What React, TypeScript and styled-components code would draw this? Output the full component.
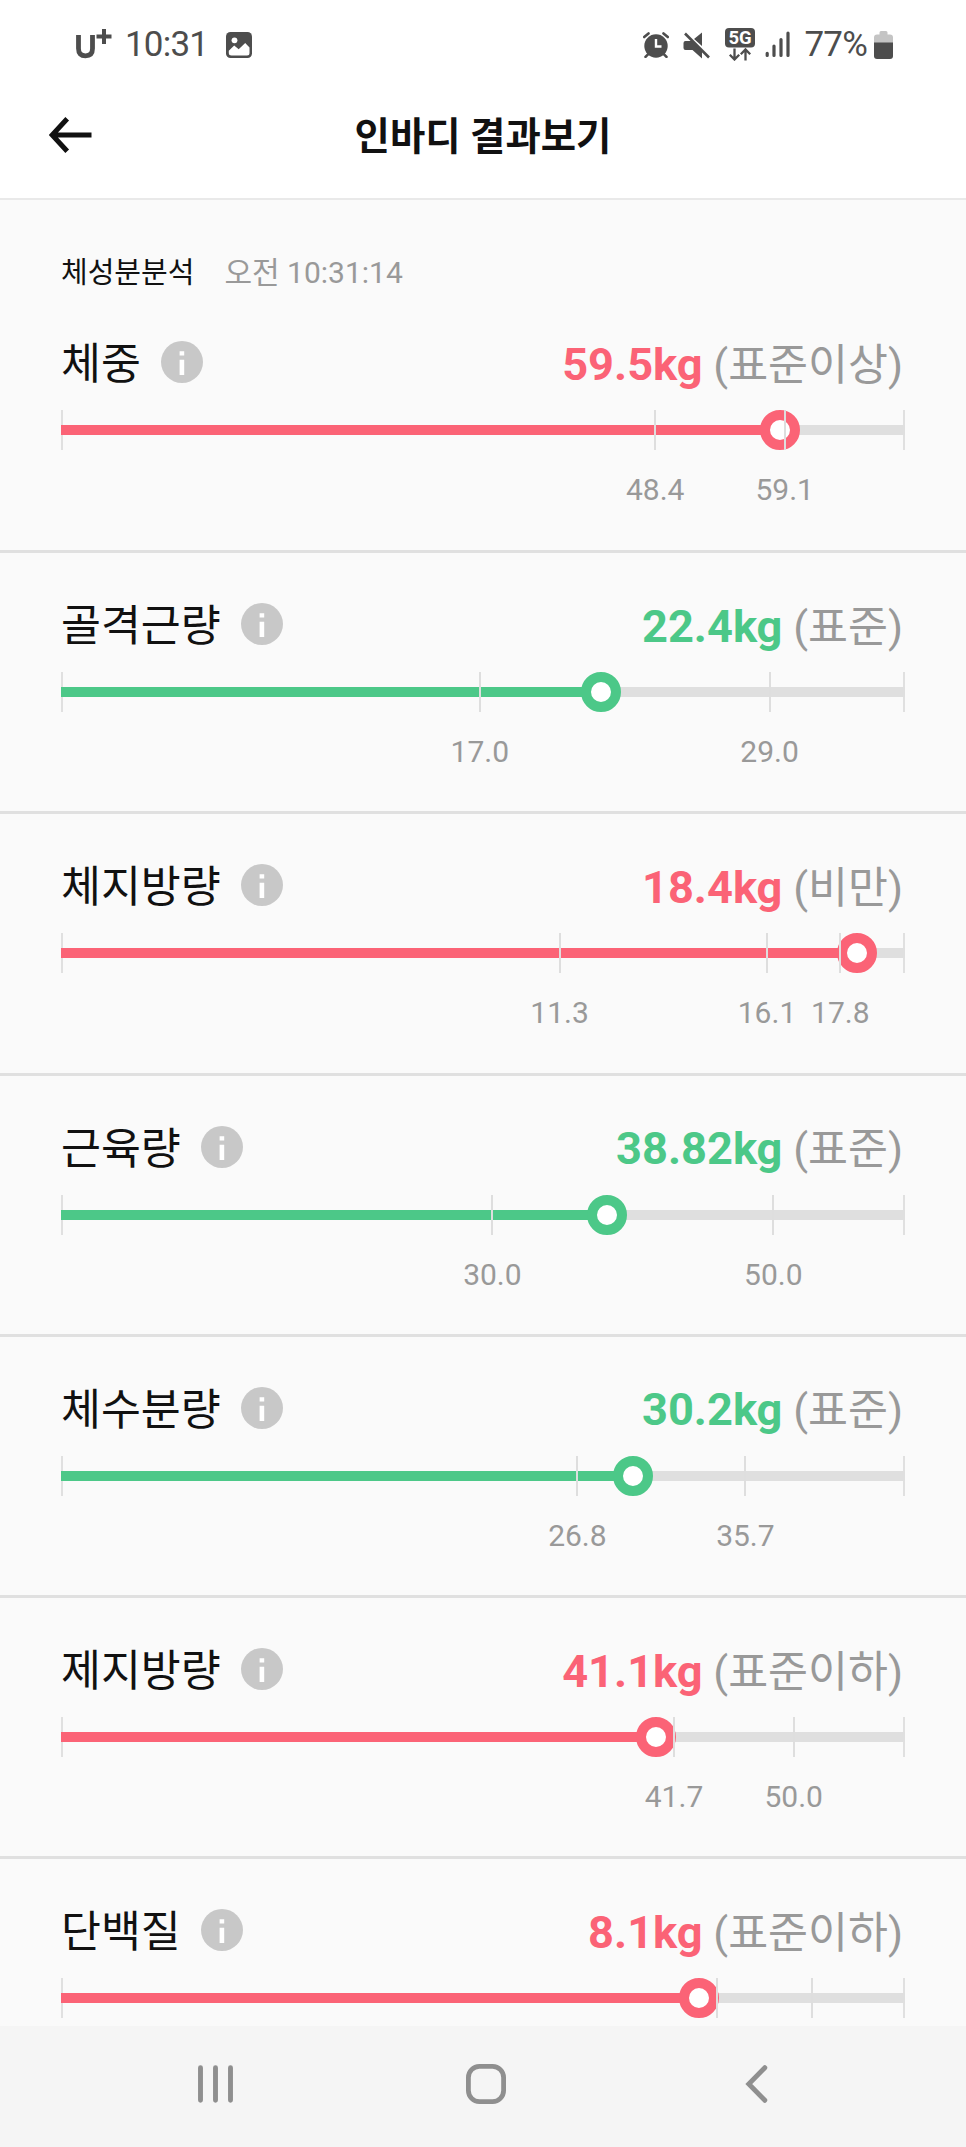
import React from 'react';
import styled, { createGlobalStyle } from 'styled-components';

const GlobalStyle = createGlobalStyle`
  * { box-sizing: border-box; }
  body { margin: 0; background: #fafafa; font-family: Roboto, 'Noto Sans CJK KR', sans-serif; }
`;

const RED = '#fb6376';
const GREEN = '#4cc888';

const Screen = styled.div`
  width: 966px;
  height: 2147px;
  display: flex;
  flex-direction: column;
  overflow: hidden;
  background: #fafafa;
`;

const StatusBar = styled.div`
  flex: none;
  height: 88px;
  padding: 0 73px 0 75px;
  display: flex;
  align-items: center;
  background: #fff;
  color: #4d4d4d;
`;

const StatusText = styled.span<{ $ml: number }>`
  margin-left: ${p => p.$ml}px;
  margin-top: 2px;
  font-size: 35px;
  line-height: 42px;
  letter-spacing: -0.8px;
`;

const StatusIcon = styled.svg<{ $ml?: number; $mt?: number }>`
  display: block;
  flex: none;
  margin-left: ${p => p.$ml ?? 0}px;
  margin-top: ${p => p.$mt ?? 0}px;
`;

const Spacer = styled.div`
  flex: 1;
`;

const AppBar = styled.header`
  flex: none;
  height: 112px;
  display: grid;
  grid-template-columns: 1fr auto 1fr;
  align-items: center;
  padding: 0 48px 16px;
  background: #fff;
  border-bottom: 2px solid #e9e9e9;
`;

const Title = styled.h1`
  margin: 4px 0 0;
  font-size: 38.4px;
  line-height: 56px;
  font-weight: 700;
  color: #111;
`;

const Content = styled.main`
  flex: 1;
  min-height: 0;
  overflow: hidden;
`;

const Caption = styled.div`
  height: 89px;
  padding: 51px 61px 0;
  display: flex;
  gap: 30px;
  font-size: 30px;
  line-height: 44px;
  color: #999;
`;

const CaptionName = styled.span`
  font-size: 29px;
  color: #111;
`;

const Section = styled.section`
  height: 261.25px;
  padding: 42px 61px 0;
  border-bottom: 3px solid #e0e0e0;
`;

const FirstSection = styled(Section)`
  height: 264px;
  padding-top: 44px;
`;

const Heading = styled.div`
  height: 64px;
  display: flex;
  align-items: center;
  justify-content: space-between;
  font-size: 43.4px;
  line-height: 64px;
`;

const Name = styled.div`
  display: flex;
  align-items: center;
  gap: 20px;
  color: #111;
`;

const InfoBadge = styled.svg`
  display: block;
  margin-bottom: 6px;
`;

const Value = styled.div`
  margin-right: 2px;
  color: #999;
`;

const Amount = styled.strong<{ $color: string }>`
  font-size: 45.2px;
  font-weight: 700;
  color: ${p => p.$color};
`;

const Gauge = styled.div`
  position: relative;
  height: 40px;
  margin-top: 13.2px;
  padding: 15px 0;
  border: solid #e0e0e0;
  border-width: 0 2px;
`;

const Track = styled.div`
  height: 10px;
  margin: 0 -2px;
  background: #dfdfdf;
`;

const Fill = styled.div<{ $color: string }>`
  height: 100%;
  background: ${p => p.$color};
`;

const Knob = styled.div<{ $color: string }>`
  position: absolute;
  top: 0;
  width: 40px;
  height: 40px;
  margin-left: -22px;
  border: 10px solid ${p => p.$color};
  border-radius: 50%;
  background: #fff;
`;

const Tick = styled.div`
  position: absolute;
  top: 0;
  width: 2px;
  height: 40px;
  margin-left: -3px;
  background: #dedede;
`;

const TickLabel = styled.span`
  position: absolute;
  top: 60px;
  width: 100px;
  margin-left: -52px;
  text-align: center;
  font-size: 30px;
  line-height: 40px;
  color: #999;
`;

const NavBar = styled.nav`
  flex: none;
  height: 121px;
  padding: 0 192px 5px;
  display: flex;
  align-items: center;
  justify-content: space-between;
  background: #f5f5f5;
`;

const NavIcon = styled.svg`
  display: block;
`;

const HomeIcon = styled(NavIcon)`
  margin-left: 5px;
`;

interface Metric {
  name: string;
  amount: string;
  status: string;
  color: string;
  at: number;
  ticks: [number, string][];
}

/* Knob and tick places are distances along the 844px scale. */
const METRICS: Metric[] = [
  { name: '체중', amount: '59.5kg', status: '표준이상', color: RED, at: 719.4, ticks: [[594.2, '48.4'], [723.7, '59.1']] },
  { name: '골격근량', amount: '22.4kg', status: '표준', color: GREEN, at: 540.4, ticks: [[418.8, '17.0'], [708.6, '29.0']] },
  { name: '체지방량', amount: '18.4kg', status: '비만', color: RED, at: 796.3, ticks: [[498.6, '11.3'], [706, '16.1'], [779.3, '17.8']] },
  { name: '근육량', amount: '38.82kg', status: '표준', color: GREEN, at: 546, ticks: [[431.4, '30.0'], [712.3, '50.0']] },
  { name: '체수분량', amount: '30.2kg', status: '표준', color: GREEN, at: 572, ticks: [[516.4, '26.8'], [684.4, '35.7']] },
  { name: '제지방량', amount: '41.1kg', status: '표준이하', color: RED, at: 595, ticks: [[613, '41.7'], [732.7, '50.0']] },
  { name: '단백질', amount: '8.1kg', status: '표준이하', color: RED, at: 638.4, ticks: [[656, ''], [750.7, '']] },
];

const InfoIcon = () => (
  <InfoBadge width="42" height="42" viewBox="0 0 42 42">
    <circle cx="21" cy="21" r="21" fill="#c8c8c8" />
    <path d="M18.6 10.2h4.6v4.2h-4.6zM18.6 18.8h4.6V34h-4.6z" fill="#fff" />
  </InfoBadge>
);

const MetricRow = ({ metric, first }: { metric: Metric; first: boolean }) => {
  const Wrap = first ? FirstSection : Section;
  return (
    <Wrap>
      <Heading>
        <Name>{metric.name}<InfoIcon /></Name>
        <Value><Amount $color={metric.color}>{metric.amount}</Amount> ({metric.status})</Value>
      </Heading>
      <Gauge>
        <Track><Fill $color={metric.color} style={{ width: metric.at }} /></Track>
        <Knob $color={metric.color} style={{ left: metric.at }} />
        {metric.ticks.map(([x]) => <Tick key={x} style={{ left: x }} />)}
        {metric.ticks.map(([x, label]) => label && <TickLabel key={x} style={{ left: x }}>{label}</TickLabel>)}
      </Gauge>
    </Wrap>
  );
};

export default function App() {
  return (
    <Screen>
      <GlobalStyle />
      <StatusBar>
        <StatusIcon width="38" height="32" viewBox="0 0 38 32">
          <path d="M3.5 7v13.5q0 7.3 7 7.3t7-7.3V7" fill="none" stroke="#4d4d4d" strokeWidth="4.8" />
          <path d="M29 1v15M21.5 8.5h15" stroke="#4d4d4d" strokeWidth="4" fill="none" />
        </StatusIcon>
        <StatusText $ml={12}>10:31</StatusText>
        <StatusIcon $ml={18} $mt={2} width="26" height="26" viewBox="0 0 26 26">
          <rect width="26" height="26" rx="4.5" fill="#4d4d4d" />
          <circle cx="8.5" cy="8.3" r="2.9" fill="#fff" />
          <path d="M2.8 18.8l5.4-5.3 4.5 3.8 6.5-6.3 4.300 4.500v5.500q0 2.500-2.500 2.500h-15.500q-2.700 0-2.700-2.500z" fill="#fff" />
        </StatusIcon>
        <Spacer />
        <StatusIcon $mt={1} width="26" height="26" viewBox="0 0 26 26">
          <circle cx="13" cy="14" r="11.7" fill="#4d4d4d" />
          <path d="M1.2 5l4.3-3.6M24.8 5l-4.3-3.6M2.5 24.8l4-4M23.5 24.8l-4-4" stroke="#4d4d4d" strokeWidth="2.6" strokeLinecap="round" />
          <path d="M13 7v7.5h5.5" fill="none" stroke="#fff" strokeWidth="2.4" />
        </StatusIcon>
        <StatusIcon $ml={14} $mt={2} width="27" height="27" viewBox="0 0 27 27">
          <path d="M0.5 11q0-2 2-2h6.5L19 19v7.5L9.5 18h-7q-2 0-2-2zM11 7L19 0.5v13.5z" fill="#4d4d4d" />
          <path d="M3.5 1L26.5 24" stroke="#fff" strokeWidth="1.6" />
          <path d="M2 1.5l24 24" stroke="#4d4d4d" strokeWidth="2.6" />
        </StatusIcon>
        <StatusIcon $ml={15} width="30" height="33" viewBox="0 0 30 33">
          <rect width="30" height="19.5" rx="4" fill="#4d4d4d" />
          <text x="15" y="16" textAnchor="middle" fontFamily="Roboto" fontWeight="700" fontSize="18.5" fill="#fff">5G</text>
          <path d="M9.5 20.5v10.5M4.8 26.8l4.7 4.7 4.7-4.7M20.5 32.5V22M15.800 26.200l4.700-4.700 4.700 4.700" fill="none" stroke="#4d4d4d" strokeWidth="2.3" />
        </StatusIcon>
        <StatusIcon $ml={10} $mt={1} width="26" height="27" viewBox="0 0 26 27">
          <path d="M2.2 22.3v2.2M9 15v9.5M16 8.5v16M23 2v22.5" stroke="#4d4d4d" strokeWidth="3.2" strokeLinecap="round" />
        </StatusIcon>
        <StatusText $ml={13}>77%</StatusText>
        <StatusIcon $ml={7} $mt={2} width="19" height="28" viewBox="0 0 19 28">
          <path d="M5.5 1.5q0-1.5 1.5-1.5h5q1.5 0 1.5 1.5V3.5h2.5q3 0 3 3V12H0V6.5q0-3 3-3h2.5z" fill="#c4c4c4" />
          <path d="M0 11.5h19V25q0 3-3 3H3q-3 0-3-3z" fill="#4d4d4d" />
        </StatusIcon>
      </StatusBar>
      <AppBar>
        <NavIcon width="44" height="36" viewBox="0 0 44 36">
          <path d="M19.2 1.8L4.2 18l15 16.2M4.2 18H43.5" fill="none" stroke="#111" strokeWidth="5" />
        </NavIcon>
        <Title>인바디 결과보기</Title>
      </AppBar>
      <Content>
        <Caption><CaptionName>체성분분석</CaptionName><span>오전 10:31:14</span></Caption>
        {METRICS.map((m, i) => <MetricRow key={m.name} metric={m} first={i === 0} />)}
      </Content>
      <NavBar>
        <NavIcon width="46" height="40" viewBox="0 0 46 40">
          <path d="M8.5 3.7v32.6M23.5 3.7v32.6M38.5 3.7v32.6" stroke="#8f8f8f" strokeWidth="4.9" strokeLinecap="round" />
        </NavIcon>
        <HomeIcon width="40" height="40" viewBox="0 0 40 40">
          <rect x="2.4" y="2.4" width="35.2" height="35.2" rx="11" fill="none" stroke="#8f8f8f" strokeWidth="4.8" />
        </HomeIcon>
        <NavIcon width="46" height="40" viewBox="0 0 46 40">
          <path d="M36.8 3.7L20.8 20l16 16.3" fill="none" stroke="#8f8f8f" strokeWidth="4.9" strokeLinecap="round" />
        </NavIcon>
      </NavBar>
    </Screen>
  );
}
